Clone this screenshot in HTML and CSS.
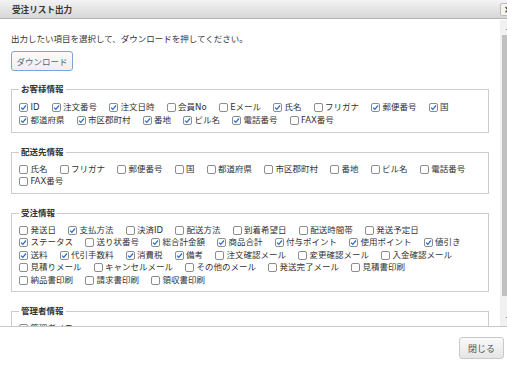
FILE: index.html
```html
<!DOCTYPE html>
<html lang="ja">
<head>
<meta charset="utf-8">
<title>受注リスト出力</title>
<link rel="stylesheet" href="styles.css">
</head>
<body>
<div class="dialog">
  <div class="titlebar">
    <span class="title">受注リスト出力</span>
    <span class="close">×</span>
  </div>
  <div class="main">
    <div class="content">
      <p class="intro">出力したい項目を選択して、ダウンロードを押してください。</p>
      <button class="btn-dl">ダウンロード</button>

      <fieldset class="group first">
        <legend>お客様情報</legend>
        <div class="opts">
          <label class="opt"><span class="box on"><svg viewBox="0 0 7 7"><path d="M1 3.6 L2.8 5.3 L6 1.5"/></svg></span>ID</label>
          <label class="opt"><span class="box on"><svg viewBox="0 0 7 7"><path d="M1 3.6 L2.8 5.3 L6 1.5"/></svg></span>注文番号</label>
          <label class="opt"><span class="box on"><svg viewBox="0 0 7 7"><path d="M1 3.6 L2.8 5.3 L6 1.5"/></svg></span>注文日時</label>
          <label class="opt"><span class="box"></span>会員No</label>
          <label class="opt"><span class="box"></span>Eメール</label>
          <label class="opt"><span class="box on"><svg viewBox="0 0 7 7"><path d="M1 3.6 L2.8 5.3 L6 1.5"/></svg></span>氏名</label>
          <label class="opt"><span class="box"></span>フリガナ</label>
          <label class="opt"><span class="box on"><svg viewBox="0 0 7 7"><path d="M1 3.6 L2.8 5.3 L6 1.5"/></svg></span>郵便番号</label>
          <label class="opt"><span class="box on"><svg viewBox="0 0 7 7"><path d="M1 3.6 L2.8 5.3 L6 1.5"/></svg></span>国</label>
          <label class="opt"><span class="box on"><svg viewBox="0 0 7 7"><path d="M1 3.6 L2.8 5.3 L6 1.5"/></svg></span>都道府県</label>
          <label class="opt"><span class="box on"><svg viewBox="0 0 7 7"><path d="M1 3.6 L2.8 5.3 L6 1.5"/></svg></span>市区郡町村</label>
          <label class="opt"><span class="box on"><svg viewBox="0 0 7 7"><path d="M1 3.6 L2.8 5.3 L6 1.5"/></svg></span>番地</label>
          <label class="opt"><span class="box on"><svg viewBox="0 0 7 7"><path d="M1 3.6 L2.8 5.3 L6 1.5"/></svg></span>ビル名</label>
          <label class="opt"><span class="box on"><svg viewBox="0 0 7 7"><path d="M1 3.6 L2.8 5.3 L6 1.5"/></svg></span>電話番号</label>
          <label class="opt"><span class="box"></span>FAX番号</label>
        </div>
      </fieldset>

      <fieldset class="group">
        <legend>配送先情報</legend>
        <div class="opts">
          <label class="opt"><span class="box"></span>氏名</label>
          <label class="opt"><span class="box"></span>フリガナ</label>
          <label class="opt"><span class="box"></span>郵便番号</label>
          <label class="opt"><span class="box"></span>国</label>
          <label class="opt"><span class="box"></span>都道府県</label>
          <label class="opt"><span class="box"></span>市区郡町村</label>
          <label class="opt"><span class="box"></span>番地</label>
          <label class="opt"><span class="box"></span>ビル名</label>
          <label class="opt"><span class="box"></span>電話番号</label>
          <label class="opt"><span class="box"></span>FAX番号</label>
        </div>
      </fieldset>

      <fieldset class="group">
        <legend>受注情報</legend>
        <div class="opts">
          <label class="opt"><span class="box"></span>発送日</label>
          <label class="opt"><span class="box on"><svg viewBox="0 0 7 7"><path d="M1 3.6 L2.8 5.3 L6 1.5"/></svg></span>支払方法</label>
          <label class="opt"><span class="box"></span>決済ID</label>
          <label class="opt"><span class="box"></span>配送方法</label>
          <label class="opt"><span class="box"></span>到着希望日</label>
          <label class="opt"><span class="box"></span>配送時間帯</label>
          <label class="opt"><span class="box"></span>発送予定日</label>
          <label class="opt"><span class="box on"><svg viewBox="0 0 7 7"><path d="M1 3.6 L2.8 5.3 L6 1.5"/></svg></span>ステータス</label>
          <label class="opt"><span class="box"></span>送り状番号</label>
          <label class="opt"><span class="box on"><svg viewBox="0 0 7 7"><path d="M1 3.6 L2.8 5.3 L6 1.5"/></svg></span>総合計金額</label>
          <label class="opt"><span class="box on"><svg viewBox="0 0 7 7"><path d="M1 3.6 L2.8 5.3 L6 1.5"/></svg></span>商品合計</label>
          <label class="opt"><span class="box on"><svg viewBox="0 0 7 7"><path d="M1 3.6 L2.8 5.3 L6 1.5"/></svg></span>付与ポイント</label>
          <label class="opt"><span class="box on"><svg viewBox="0 0 7 7"><path d="M1 3.6 L2.8 5.3 L6 1.5"/></svg></span>使用ポイント</label>
          <label class="opt"><span class="box on"><svg viewBox="0 0 7 7"><path d="M1 3.6 L2.8 5.3 L6 1.5"/></svg></span>値引き</label>
          <label class="opt"><span class="box on"><svg viewBox="0 0 7 7"><path d="M1 3.6 L2.8 5.3 L6 1.5"/></svg></span>送料</label>
          <label class="opt"><span class="box on"><svg viewBox="0 0 7 7"><path d="M1 3.6 L2.8 5.3 L6 1.5"/></svg></span>代引手数料</label>
          <label class="opt"><span class="box on"><svg viewBox="0 0 7 7"><path d="M1 3.6 L2.8 5.3 L6 1.5"/></svg></span>消費税</label>
          <label class="opt"><span class="box on"><svg viewBox="0 0 7 7"><path d="M1 3.6 L2.8 5.3 L6 1.5"/></svg></span>備考</label>
          <label class="opt"><span class="box"></span>注文確認メール</label>
          <label class="opt"><span class="box"></span>変更確認メール</label>
          <label class="opt"><span class="box"></span>入金確認メール</label>
          <label class="opt"><span class="box"></span>見積りメール</label>
          <label class="opt"><span class="box"></span>キャンセルメール</label>
          <label class="opt"><span class="box"></span>その他のメール</label>
          <label class="opt"><span class="box"></span>発送完了メール</label>
          <label class="opt"><span class="box"></span>見積書印刷</label>
          <label class="opt"><span class="box"></span>納品書印刷</label>
          <label class="opt"><span class="box"></span>請求書印刷</label>
          <label class="opt"><span class="box"></span>領収書印刷</label>
        </div>
      </fieldset>

      <fieldset class="group">
        <legend>管理者情報</legend>
        <div class="opts">
          <label class="opt"><span class="box"></span>管理者メモ</label>
        </div>
      </fieldset>
    </div>
    <div class="scrollbar">
      <span class="sb-btn up"></span>
      <span class="sb-thumb"></span>
      <span class="sb-track"></span>
      <span class="sb-btn down"></span>
    </div>
  </div>
  <div class="footer">
    <button class="btn-close">閉じる</button>
  </div>
</div>
</body>
</html>
```

FILE: styles.css
```css
html, body {
  margin: 0;
  padding: 0;
  overflow: hidden;
  background: #fff;
}

body {
  font-family: "DejaVu Sans", "Noto Sans CJK JP", sans-serif;
  font-size: 8.5px;
  color: #333;
}

.dialog {
  width: 517px;
}

.titlebar {
  height: 19px;
  box-sizing: border-box;
  border-bottom: 1px solid #b4b4b4;
  background: linear-gradient(#f3f3f3, #d7d7d7);
  display: flex;
  align-items: center;
  justify-content: space-between;
  padding: 0 1px 0 12px;
}

.title {
  font-weight: bold;
  font-size: 8.6px;
  color: #333;
}

.close {
  width: 14px;
  height: 11px;
  border: 1px solid #bdbdbd;
  border-radius: 2px;
  background: #f4f4f4;
  font-size: 10px;
  line-height: 11px;
  text-align: center;
  color: #444;
  font-weight: bold;
}

.main {
  display: flex;
  height: 307px;
  padding-top: 1px;
  box-sizing: border-box;
}

.content {
  width: 500px;
  flex: none;
  box-sizing: border-box;
  padding: 13px 11px 0;
  overflow: hidden;
}

.intro {
  margin: 0 0 5.5px;
  line-height: 12.5px;
}

.btn-dl {
  display: block;
  width: 62px;
  height: 20px;
  padding: 0;
  border: 1px solid #78a6d6;
  border-radius: 3px;
  background: linear-gradient(#fbfbfb, #efefef);
  font: inherit;
  color: #56677c;
}

.group {
  margin: 11.75px 0 0;
  padding: 4.5px 7px 5px 7px;
  border: 1px solid #cccccc;
}

.group.first {
  padding-top: 6px;
  padding-bottom: 5.5px;
}

.group + .group {
  margin-top: 13px;
}

.group legend {
  padding: 0 2px;
  font-weight: bold;
  line-height: 12.5px;
  color: #333;
}

.opts {
  display: flex;
  flex-wrap: wrap;
  line-height: 12.5px;
}

.opt {
  display: inline-flex;
  align-items: center;
  margin-right: 12px;
  white-space: nowrap;
}

.box {
  width: 9px;
  height: 9px;
  box-sizing: border-box;
  border: 1px solid #8d8d8d;
  border-radius: 2px;
  margin-right: 2.5px;
  background: #fff;
  display: inline-flex;
  align-items: center;
  justify-content: center;
  flex: none;
}

.box svg {
  width: 7px;
  height: 7px;
  display: block;
}

.box svg path {
  fill: none;
  stroke: #2a6fd3;
  stroke-width: 1.3;
}

.scrollbar {
  width: 17px;
  flex: none;
  display: flex;
  flex-direction: column;
  background: #f1f1f1;
}

.sb-btn {
  height: 15px;
  flex: none;
  display: flex;
  align-items: center;
  justify-content: center;
}

.sb-btn.up::before {
  content: "";
  border-left: 3.5px solid transparent;
  border-right: 3.5px solid transparent;
  border-bottom: 4px solid #505050;
}

.sb-btn.down::before {
  content: "";
  border-left: 3.5px solid transparent;
  border-right: 3.5px solid transparent;
  border-top: 4px solid #505050;
}

.sb-thumb {
  height: 261px;
  flex: none;
  margin: 0 2px;
  background: #c1c1c1;
}

.sb-track {
  flex: 1;
}

.footer {
  border-top: 1px solid #c8c8c8;
  height: 45px;
  box-sizing: border-box;
  padding: 10px 13px 0 0;
  display: flex;
  justify-content: flex-end;
  align-items: flex-start;
}

.btn-close {
  width: 45px;
  height: 22px;
  padding: 0;
  border: 1px solid #c9c9c9;
  border-radius: 3px;
  background: linear-gradient(#fafafa, #e5e5e5);
  font: inherit;
  font-size: 9px;
  color: #555;
}
```
